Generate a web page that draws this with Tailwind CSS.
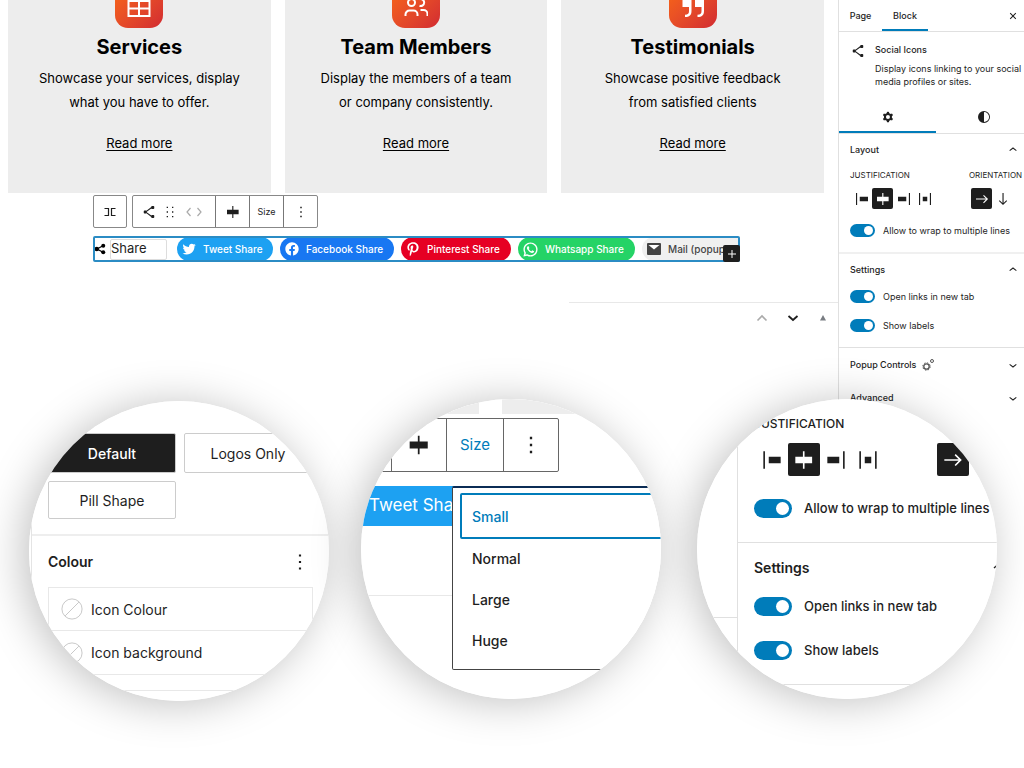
<!DOCTYPE html>
<html lang="en">
<head>
<meta charset="utf-8">
<title>Social Icons block</title>
<script src="https://cdn.jsdelivr.net/npm/@tailwindcss/browser@4"></script>
</head>
<body class="bg-white font-['Inter',sans-serif] text-[#1e1e1e]">
<svg class="hidden" xmlns="http://www.w3.org/2000/svg">
  <symbol id="share" viewBox="0 0 24 24"><path d="M9 11.8l6.1-4.5c.1.4.4.7.9.7h2c.6 0 1-.4 1-1V5c0-.6-.4-1-1-1h-2c-.6 0-1 .4-1 1v.4l-6.4 4.8c-.2-.1-.4-.2-.6-.2H6c-.6 0-1 .4-1 1v2c0 .6.4 1 1 1h2c.2 0 .4-.1.6-.2l6.4 4.8v.4c0 .6.4 1 1 1h2c.6 0 1-.4 1-1v-2c0-.6-.4-1-1-1h-2c-.5 0-.8.3-.9.7L9 12.2v-.4z"/></symbol>
  <symbol id="share-round" viewBox="0 0 24 24"><circle cx="5.500" cy="12" r="4.500"/><circle cx="18.500" cy="5.500" r="4"/><circle cx="18.500" cy="18.500" r="4"/><path d="M18 5.500 6 12l12 6.500" fill="none" stroke="currentColor" stroke-width="2.400"/></symbol>
  <symbol id="j-left" viewBox="0 0 24 24"><path d="M9 9v6h11V9H9zM4 20h1.500V4H4v16z"/></symbol>
  <symbol id="j-center" viewBox="0 0 24 24"><path d="M12.500 15v5H11v-5H4V9h7V4h1.500v5h7v6h-7Z"/></symbol>
  <symbol id="j-right" viewBox="0 0 24 24"><path d="M4 15h11V9H4v6zM18.500 4v16H20V4h-1.500z"/></symbol>
  <symbol id="j-between" viewBox="0 0 24 24"><path d="M9 15h6V9H9v6zm-5 5h1.500V4H4v16zM18.500 4v16H20V4h-1.500z"/></symbol>
  <symbol id="arrow-right" viewBox="0 0 24 24"><path d="m14.500 6.500-1 1 3.700 3.700H4v1.600h13.200l-3.700 3.700 1 1 5.600-5.500z"/></symbol>
  <symbol id="arrow-down" viewBox="0 0 24 24"><path d="m16.500 13.500-3.700 3.700V4h-1.500v13.200l-3.800-3.700-1 1 5.500 5.600 5.500-5.600z"/></symbol>
  <symbol id="chev-up" viewBox="0 0 24 24"><path d="M6.500 12.400L12 8l5.500 4.400-.9 1.200L12 10l-4.500 3.600-1-1.200z"/></symbol>
  <symbol id="chev-down" viewBox="0 0 24 24"><path d="M17.500 11.600L12 16l-5.500-4.400.9-1.200L12 14l4.500-3.600 1 1.200z"/></symbol>
  <symbol id="more" viewBox="0 0 24 24"><path d="M13 19h-2v-2h2v2zm0-6h-2v-2h2v2zm0-6h-2V5h2v2z"/></symbol>
  <symbol id="drag" viewBox="0 0 24 24"><path d="M7 6h2V4H7v2zm0 7h2v-2H7v2zm0 7h2v-2H7v2zm8-16v2h2V4h-2zm0 9h2v-2h-2v2zm0 7h2v-2h-2v2z"/></symbol>
  <symbol id="contrast" viewBox="0 0 24 24"><path fill-rule="evenodd" d="M20 12a8 8 0 1 1-16 0 8 8 0 0 1 16 0Zm-1.200 0a6.800 6.800 0 0 1-6.800 6.800v-13.600a6.800 6.800 0 0 1 6.800 6.800Z"/></symbol>
  <symbol id="close" viewBox="0 0 24 24"><path d="M12 13.060l3.712 3.713 1.061-1.060L13.061 12l3.712-3.712-1.060-1.060L12 10.938 8.288 7.227l-1.061 1.060L10.939 12l-3.712 3.712 1.060 1.061L12 13.061z"/></symbol>
  <symbol id="gear" viewBox="0 0 24 24"><path fill-rule="evenodd" d="M10.289 4.836A1 1 0 0111.275 4h1.306a1 1 0 01.987.836l.244 1.466c.787.260 1.503.679 2.108 1.218l1.393-.522a1 1 0 011.216.437l.653 1.130a1 1 0 01-.230 1.273l-1.148.944a6.025 6.025 0 010 2.435l1.149.946a1 1 0 01.230 1.272l-.653 1.130a1 1 0 01-1.216.437l-1.394-.522c-.605.540-1.320.958-2.108 1.218l-.244 1.466a1 1 0 01-.987.836h-1.306a1 1 0 01-.986-.836l-.244-1.466a5.995 5.995 0 01-2.108-1.218l-1.394.522a1 1 0 01-1.217-.436l-.653-1.131a1 1 0 01.230-1.272l1.149-.946a6.026 6.026 0 010-2.435l-1.148-.944a1 1 0 01-.230-1.272l.653-1.131a1 1 0 011.217-.437l1.393.522a5.994 5.994 0 012.108-1.218l.244-1.466zM14.929 12a3 3 0 11-6 0 3 3 0 016 0z"/></symbol>
  <symbol id="none" viewBox="0 0 24 24"><circle cx="12" cy="12" r="11" fill="#fff" stroke="#c4c4c4"/><path d="M4.500 19.500 19.500 4.500" stroke="#c4c4c4"/></symbol>
</svg>

<div class="relative min-h-screen overflow-hidden">
  <div class="flex items-start">
    <main class="min-w-0 flex-1">
      <section class="grid grid-cols-3 gap-[14px] pl-2 pr-[14px]">
        <article class="h-[193px] overflow-hidden bg-[#ededed] text-center text-black">
          <div class="mx-auto -mt-5 flex size-12 items-center justify-center rounded-[13px] bg-linear-135 from-[#fb6a0c] to-[#d22a31]">
            <svg class="mt-2 size-6" viewBox="0 0 24 24" fill="none" stroke="#fff" stroke-width="2"><path d="M1.500-2h21v22h-21zM12-2v22M1.500 5h21M1.500 12.500h21"/></svg>
          </div>
          <h2 class="mt-1 text-[20px] leading-[30px] font-bold">Services</h2>
          <p class="mt-1 text-[13px] leading-6">Showcase your services, display<br>what you have to offer.</p>
          <a href="#" class="mt-[17px] inline-block text-[13px] leading-6 underline underline-offset-2">Read more</a>
        </article>
        <article class="h-[193px] overflow-hidden bg-[#ededed] text-center text-black">
          <div class="mx-auto -mt-5 flex size-12 items-center justify-center rounded-[13px] bg-linear-135 from-[#fb6a0c] to-[#d22a31]">
            <svg class="mt-2 size-6" viewBox="0 0 24 24" fill="none" stroke="#fff" stroke-width="2"><circle cx="7.500" cy="6.500" r="3.500"/><path d="M1.500 20v-1.500a4 4 0 0 1 4-4h4a4 4 0 0 1 4 4V20M15.500 3.200a3.500 3.500 0 1 1 0 6.600M16.500 14h3a4 4 0 0 1 4 4v2"/></svg>
          </div>
          <h2 class="mt-1 text-[20px] leading-[30px] font-bold">Team Members</h2>
          <p class="mt-1 text-[13px] leading-6">Display the members of a team<br>or company consistently.</p>
          <a href="#" class="mt-[17px] inline-block text-[13px] leading-6 underline underline-offset-2">Read more</a>
        </article>
        <article class="h-[193px] overflow-hidden bg-[#ededed] text-center text-black">
          <div class="mx-auto -mt-5 flex size-12 items-center justify-center rounded-[13px] bg-linear-135 from-[#fb6a0c] to-[#d22a31]">
            <svg class="mt-2 size-6" viewBox="0 0 24 24" fill="#fff"><path d="M1.500 4h9v11c0 4-2 6-6.500 6v-2.200c3 0 4-1.300 4-3.800v-4H1.500zM14 4h9v11c0 4-2 6-6.500 6v-2.200c3 0 4-1.300 4-3.800v-4H14z"/></svg>
          </div>
          <h2 class="mt-1 text-[20px] leading-[30px] font-bold">Testimonials</h2>
          <p class="mt-1 text-[13px] leading-6">Showcase positive feedback<br>from satisfied clients</p>
          <a href="#" class="mt-[17px] inline-block text-[13px] leading-6 underline underline-offset-2">Read more</a>
        </article>
      </section>

      <div class="mt-0.5 flex gap-[5px] pl-[93px]">
        <button aria-label="Select parent block" class="flex h-[33px] w-[34px] items-center justify-center rounded-xs border border-[#888]">
          <svg class="h-3 w-3.5" viewBox="0 0 14 12" fill="none" stroke="#1e1e1e" stroke-width="1.200"><path d="M1.500 2.500H5.500v7H1.500M12.500 2.500H8.500v7H12.500"/></svg>
        </button>
        <div class="flex h-[33px] rounded-xs border border-[#888]" role="toolbar">
          <div class="flex w-[83px] items-center border-r border-[#777] pl-[7px]">
            <button aria-label="Social icons"><svg class="size-[18px]" fill="currentColor"><use href="#share"/></svg></button>
            <button aria-label="Drag" class="ml-1"><svg class="size-4" fill="currentColor"><use href="#drag"/></svg></button>
            <button aria-label="Move" class="ml-2"><svg class="h-3 w-4" viewBox="0 0 16 12" fill="none" stroke="#aaa" stroke-width="1.200"><path d="M4.500 2 1 6l3.500 4M11.500 2 15 6l-3.500 4"/></svg></button>
          </div>
          <button aria-label="Justify" class="flex w-[34px] items-center justify-center border-r border-[#777]"><svg class="size-[18px]" fill="currentColor"><use href="#j-center"/></svg></button>
          <button class="w-[34px] border-r border-[#777] text-[9px]">Size</button>
          <button aria-label="Options" class="flex w-[33px] items-center justify-center"><svg class="size-[18px]" fill="currentColor"><use href="#more"/></svg></button>
        </div>
      </div>

      <div class="relative mt-2 ml-[93px] flex h-[26px] w-[647px] items-center rounded-xs text-[10px] font-medium text-white">
        <svg class="ml-px size-3 shrink-0 text-black" fill="currentColor"><use href="#share-round"/></svg>
        <input aria-label="Share text" value="Share" class="ml-1 h-[21px] w-[57px] shrink-0 rounded-xs border border-[#ddd] pb-0.5 text-[13px] font-normal text-[#1e1e1e]">
        <div class="ml-2.5 flex h-[24px] min-w-0 flex-1 gap-[7px] overflow-hidden">
          <a href="#" class="flex w-[96px] shrink-0 items-center rounded-full bg-[#1da1f2] pl-1"><svg class="size-4" viewBox="0 0 24 24" fill="#fff"><path d="M22.230 5.924c-.736.326-1.527.547-2.357.646.847-.508 1.498-1.312 1.804-2.270-.793.470-1.671.812-2.606.996C18.324 4.498 17.257 4 16.077 4c-2.266 0-4.103 1.837-4.103 4.103 0 .322.036.635.106.935C8.670 8.867 5.647 7.234 3.623 4.751 3.270 5.357 3.067 6.062 3.067 6.814c0 1.424.724 2.679 1.825 3.415-.673-.021-1.305-.206-1.859-.513v.052c0 1.988 1.414 3.647 3.292 4.023-.344.094-.707.144-1.081.144-.264 0-.521-.026-.772-.074.522 1.630 2.038 2.816 3.833 2.850-1.404 1.100-3.174 1.756-5.096 1.756-.331 0-.658-.019-.979-.057 1.816 1.164 3.973 1.843 6.290 1.843 7.547 0 11.675-6.252 11.675-11.675 0-.178-.004-.355-.012-.531C20.985 7.470 21.680 6.747 22.230 5.924z"/></svg><span class="ml-1.5">Tweet Share</span></a>
          <a href="#" class="flex w-[114px] shrink-0 items-center rounded-full bg-[#1877f2] pl-1"><svg class="size-4" viewBox="0 0 24 24" fill="#fff"><path d="M12 2C6.500 2 2 6.500 2 12c0 5 3.700 9.100 8.400 9.900v-7H7.900V12h2.500V9.800c0-2.500 1.500-3.900 3.800-3.900 1.100 0 2.200.2 2.200.2v2.500h-1.300c-1.200 0-1.600.8-1.600 1.600V12h2.800l-.4 2.900h-2.300v7C18.300 21.100 22 17 22 12c0-5.500-4.500-10-10-10z"/></svg><span class="ml-1.5">Facebook Share</span></a>
          <a href="#" class="flex w-[110px] shrink-0 items-center rounded-full bg-[#e60023] pl-1"><svg class="size-4" viewBox="0 0 24 24" fill="#fff"><path d="M12.289 2C6.617 2 3.606 5.648 3.606 9.622c0 1.846 1.025 4.146 2.666 4.878.250.111.381.063.439-.169.044-.175.267-1.029.365-1.428.032-.128.017-.237-.091-.362C6.445 11.911 6.010 10.750 6.010 9.668c0-2.777 2.194-5.464 5.933-5.464 3.230 0 5.490 2.108 5.490 5.122 0 3.407-1.794 5.768-4.130 5.768-1.291 0-2.257-1.021-1.948-2.277.372-1.495 1.089-3.112 1.089-4.191 0-.967-.542-1.775-1.663-1.775-1.319 0-2.379 1.309-2.379 3.059 0 1.115.394 1.869.394 1.869s-1.302 5.279-1.540 6.261c-.405 1.666.053 4.368.094 4.604.021.126.167.169.250.063.129-.165 1.699-2.419 2.142-4.051.158-.590.817-2.995.817-2.995.430.784 1.681 1.446 3.013 1.446 3.963 0 6.822-3.494 6.822-7.833C20.394 5.112 16.849 2 12.289 2"/></svg><span class="ml-1.5">Pinterest Share</span></a>
          <a href="#" class="flex w-[117px] shrink-0 items-center rounded-full bg-[#25d366] pl-1"><svg class="size-[17px]" viewBox="0 0 24 24" fill="#fff"><path fill-rule="evenodd" d="M12.012 2C6.506 2 2.023 6.478 2.021 11.984c-.001 1.760.460 3.479 1.334 4.993L2 22l5.232-1.236c1.459.796 3.102 1.214 4.774 1.215h.004c5.505 0 9.985-4.480 9.988-9.985.002-2.669-1.036-5.178-2.922-7.066C17.190 3.041 14.684 2.001 12.012 2zM12.010 4c2.136.001 4.143.834 5.652 2.342 1.509 1.510 2.338 3.516 2.336 5.650-.002 4.404-3.584 7.987-7.990 7.987-1.333-.001-2.654-.336-3.817-.971l-.673-.367-.745.175-1.968.465.480-1.785.217-.801-.414-.718c-.698-1.208-1.067-2.590-1.066-3.993C4.023 7.582 7.607 4 12.010 4zM8.477 7.375c-.167 0-.437.063-.666.313-.229.249-.875.852-.875 2.080 0 1.228.894 2.415 1.019 2.582.124.166 1.727 2.765 4.264 3.765 2.108.831 2.536.667 2.994.625.458-.041 1.477-.602 1.685-1.185.208-.583.209-1.085.147-1.188-.062-.104-.229-.166-.479-.291-.249-.125-1.476-.727-1.705-.810-.229-.083-.396-.125-.562.125-.166.250-.643.810-.789.976-.146.167-.291.190-.541.065-.250-.126-1.054-.390-2.008-1.240-.742-.661-1.243-1.477-1.389-1.727-.145-.249-.014-.386.111-.510.112-.112.248-.291.373-.437.124-.146.167-.250.250-.416.083-.166.041-.313-.021-.438-.062-.125-.548-1.358-.770-1.852-.187-.415-.384-.424-.562-.431-.145-.006-.311-.006-.477-.006z"/></svg><span class="ml-1.5">Whatsapp Share</span></a>
          <a href="#" class="flex w-[130px] shrink-0 items-center rounded-full bg-[#f0f0f0] pl-1 text-[#444]"><svg class="h-3 w-4 text-[#444]" viewBox="0 0 16 12" fill="currentColor"><rect x="1" width="14" height="12" rx="1"/><path d="M2.500 2h11L8 6.500z" fill="#fff"/></svg><span class="ml-1.5 whitespace-nowrap">Mail (popup)</span></a>
        </div>
        <div class="pointer-events-none absolute inset-0 rounded-xs border-2 border-t-2 border-[#2b8cc4]"></div>
        <button aria-label="Add block" class="absolute right-0 bottom-0 flex size-[17px] items-center justify-center rounded-xs bg-[#1e1e1e]"><svg class="size-2.5" viewBox="0 0 10 10" stroke="#fff"><path d="M5 1v8M1 5h8"/></svg></button>
      </div>

      <div class="mt-[40px] ml-[569px] flex h-8 items-center justify-end gap-[15px] border-t border-[#e8e8e8] pr-2 pb-0.5">
        <button aria-label="Move up" class="flex w-4 justify-center"><svg class="h-2 w-3" viewBox="0 0 12 8" fill="none" stroke="#aaa" stroke-width="1.600"><path d="M1.500 6.500 6 2l4.500 4.500"/></svg></button>
        <button aria-label="Move down" class="flex w-4 justify-center"><svg class="h-2 w-3" viewBox="0 0 12 8" fill="none" stroke="#1e1e1e" stroke-width="1.800"><path d="M1.500 2 6 6l4.500-4"/></svg></button>
        <button aria-label="Toggle panel" class="flex w-3.5 justify-center"><svg class="size-1.5" viewBox="0 0 6 6" fill="#787c82"><path d="m3 0 3 5.500H0z"/></svg></button>
      </div>
    </main>

    <aside class="h-[430px] w-[186px] shrink-0 border-l border-[#e0e0e0] bg-white text-[9px]">
      <div class="flex h-8 items-stretch border-b border-[#e0e0e0] text-[9px] font-medium">
        <button class="w-[43px]">Page</button>
        <button class="w-[46px] border-t-2 border-b-2 border-t-transparent border-b-[#007cba]">Block</button>
        <button aria-label="Close" class="mr-[3px] ml-auto"><svg class="size-4" fill="currentColor"><use href="#close"/></svg></button>
      </div>
      <div class="flex h-[69px] gap-2 pt-2.5 pl-2.5">
        <svg class="size-[18px] shrink-0" fill="currentColor"><use href="#share"/></svg>
        <div>
          <h3 class="leading-4 font-medium">Social Icons</h3>
          <p class="mt-1 leading-[13px] whitespace-nowrap">Display icons linking to your social<br>media profiles or sites.</p>
        </div>
      </div>
      <div class="flex h-[33px] border-b border-[#e0e0e0]">
        <button aria-label="Settings" class="flex w-[97px] items-center justify-center border-t-2 border-b-2 border-t-transparent border-b-[#007cba]"><svg class="size-4" fill="currentColor"><use href="#gear"/></svg></button>
        <button aria-label="Styles" class="flex flex-1 items-center justify-center pl-2"><svg class="size-[18px]" fill="currentColor"><use href="#contrast"/></svg></button>
      </div>
      <section class="h-[120px] border-b-2 border-[#f0f0f0] pl-[11px]">
        <button class="flex h-8 w-full items-center justify-between pr-[3px] font-medium">Layout<svg class="size-4" fill="currentColor"><use href="#chev-up"/></svg></button>
        <div class="flex text-[8px] leading-[18px]"><span class="w-[119px]">JUSTIFICATION</span><span>ORIENTATION</span></div>
        <div class="mt-1 flex items-center">
          <div class="flex w-[121px] pl-px">
            <button aria-label="Left" class="flex size-[21px] items-center justify-center"><svg class="size-[18px]" fill="currentColor"><use href="#j-left"/></svg></button>
            <button aria-label="Center" class="flex size-[21px] items-center justify-center rounded-xs bg-[#1e1e1e] text-white"><svg class="size-[18px]" fill="currentColor"><use href="#j-center"/></svg></button>
            <button aria-label="Right" class="flex size-[21px] items-center justify-center"><svg class="size-[18px]" fill="currentColor"><use href="#j-right"/></svg></button>
            <button aria-label="Space between" class="flex size-[21px] items-center justify-center"><svg class="size-[18px]" fill="currentColor"><use href="#j-between"/></svg></button>
          </div>
          <button aria-label="Horizontal" class="flex size-[21px] items-center justify-center rounded-xs bg-[#1e1e1e] text-white"><svg class="size-[18px]" fill="currentColor"><use href="#arrow-right"/></svg></button>
          <button aria-label="Vertical" class="flex size-[21px] items-center justify-center"><svg class="size-[18px]" fill="currentColor"><use href="#arrow-down"/></svg></button>
        </div>
        <label class="mt-[15px] flex items-center gap-2 leading-[13px] whitespace-nowrap"><input type="checkbox" checked class="h-[13px] w-[25px] shrink-0 appearance-none rounded-full bg-[#007cba] before:mt-0.5 before:ml-3.5 before:block before:size-[9px] before:rounded-full before:bg-white">Allow to wrap to multiple lines</label>
      </section>
      <section class="h-[94px] border-b border-[#e0e0e0] pl-[11px]">
        <button class="flex h-8 w-full items-center justify-between pr-[3px] font-medium">Settings<svg class="size-4" fill="currentColor"><use href="#chev-up"/></svg></button>
        <label class="mt-1 flex items-center gap-2 leading-[13px]"><input type="checkbox" checked class="h-[13px] w-[25px] shrink-0 appearance-none rounded-full bg-[#007cba] before:mt-0.5 before:ml-3.5 before:block before:size-[9px] before:rounded-full before:bg-white">Open links in new tab</label>
        <label class="mt-4 flex items-center gap-2 leading-[13px]"><input type="checkbox" checked class="h-[13px] w-[25px] shrink-0 appearance-none rounded-full bg-[#007cba] before:mt-0.5 before:ml-3.5 before:block before:size-[9px] before:rounded-full before:bg-white">Show labels</label>
      </section>
      <button class="flex h-[33px] w-full items-center pr-[3px] pl-[11px] font-medium">Popup Controls
        <svg class="ml-1.5 size-3" viewBox="0 0 12 12" fill="none" stroke="#555"><circle cx="4.500" cy="7.500" r="2.700" stroke-width="1.300"/><circle cx="4.500" cy="7.500" r="3.700" stroke-width="1" stroke-dasharray="1.450"/><circle cx="10" cy="2" r="1.500"/></svg>
        <svg class="ml-auto size-4" fill="currentColor"><use href="#chev-down"/></svg></button>
      <button class="flex h-[33px] w-full items-center justify-between pr-[3px] pl-[11px] font-medium">Advanced<svg class="size-4" fill="currentColor"><use href="#chev-down"/></svg></button>
    </aside>
  </div>

  <!-- Magnified details floating over the editor -->
  <div class="absolute inset-x-0 top-[399px] flex pl-[29px] text-[14px]">
    <div class="mt-0.5 size-[300px] shrink-0 rounded-full shadow-[-6px_3px_44px_rgba(0,0,0,0.25)]">
      <div class="size-full overflow-hidden rounded-full bg-white">
        <div class="ml-0.5 h-full w-[340px] border-l border-[#e4e4e4]">
          <div class="flex flex-wrap gap-2 pt-8 pl-4">
            <button class="h-10 w-[128px] rounded-xs border border-[#ccc] bg-[#1e1e1e] font-medium text-white">Default</button>
            <button class="h-10 w-[128px] rounded-xs border border-[#ccc]">Logos Only</button>
            <button class="h-[38px] w-[128px] rounded-xs border border-[#ccc]">Pill Shape</button>
          </div>
          <div class="mt-[15px] border-t-2 border-[#eee] pl-4">
            <div class="flex h-[51px] w-[265px] items-center justify-between font-semibold"><h3>Colour</h3><button aria-label="Colour options"><svg class="size-[26px]" fill="currentColor"><use href="#more"/></svg></button></div>
            <div class="w-[265px] border border-[#e8e8e8]">
              <button class="flex h-[43px] w-full items-center gap-2 border-b border-[#e8e8e8] pl-3"><svg class="size-[22px]"><use href="#none"/></svg>Icon Colour</button>
              <button class="flex h-[43px] w-full items-center gap-2 pl-3"><svg class="size-[22px]"><use href="#none"/></svg>Icon background</button>
            </div>
          </div>
          <div class="mt-[15px] border-t border-[#e8e8e8]"></div>
        </div>
      </div>
    </div>

    <div class="ml-8 size-[300px] shrink-0 rounded-full shadow-[-6px_3px_44px_rgba(0,0,0,0.25)]">
      <div class="relative size-full overflow-hidden rounded-full bg-white">
        <div class="flex h-[15px] gap-[23px]"><div class="w-[118px] bg-[#ededed]"></div><div class="flex-1 bg-[#ededed]"></div></div>
        <div class="mt-1 flex h-[54px] w-[198px] rounded-xs border border-[#666]">
          <div class="w-[30px] border-r border-[#666]"></div>
          <button aria-label="Justify" class="flex w-[55px] items-center justify-center border-r border-[#666]"><svg class="size-7" fill="currentColor"><use href="#j-center"/></svg></button>
          <button class="w-[57px] border-r border-[#666] text-[15px] text-[#007cba]">Size</button>
          <button aria-label="Options" class="flex flex-1 items-center justify-center"><svg class="size-7" fill="currentColor"><use href="#more"/></svg></button>
        </div>
        <a href="#" class="mt-3.5 flex h-10 w-[130px] items-center bg-[#1da1f2] pl-2 text-[17px] whitespace-nowrap text-white">Tweet Share</a>
        <div class="mt-[69px] border-t border-[#e8e8e8]"></div>
        <div role="menu" class="absolute top-[87px] left-[91px] h-[184px] w-[230px] rounded-xs border border-t-2 border-[#444] border-t-[#0b2c55] bg-white py-[5px] pl-[7px] font-medium">
          <button role="menuitem" class="block h-[46px] w-full rounded-xs border-2 border-[#007cba] pl-2.5 text-left text-[#007cba]">Small</button>
          <button role="menuitem" class="block h-10 w-full pl-3 text-left leading-[32px]">Normal</button>
          <button role="menuitem" class="block h-[41px] w-full pl-3 text-left leading-[32px]">Large</button>
          <button role="menuitem" class="block h-[41px] w-full pl-3 text-left leading-[32px]">Huge</button>
        </div>
      </div>
    </div>

    <div class="ml-9 size-[300px] shrink-0 rounded-full shadow-[-6px_3px_44px_rgba(0,0,0,0.25)]">
      <div class="flex size-full overflow-hidden rounded-full bg-white text-[13px] font-medium">
        <div class="w-[41px] shrink-0 border-r border-[#e0e0e0]"><div class="mt-[218px] border-t border-[#e0e0e0]"></div></div>
        <div class="min-w-0 flex-1">
          <div class="pl-4">
            <div class="pt-4 text-[12px] leading-[18px]">JUSTIFICATION</div>
            <div class="mt-2.5 flex pl-0.5">
              <button aria-label="Left" class="flex h-[33px] w-8 items-center justify-center"><svg class="size-[26px]" fill="currentColor"><use href="#j-left"/></svg></button>
              <button aria-label="Center" class="flex h-[33px] w-8 items-center justify-center rounded-xs bg-[#1e1e1e] text-white"><svg class="size-[26px]" fill="currentColor"><use href="#j-center"/></svg></button>
              <button aria-label="Right" class="flex h-[33px] w-8 items-center justify-center"><svg class="size-[26px]" fill="currentColor"><use href="#j-right"/></svg></button>
              <button aria-label="Space between" class="flex h-[33px] w-8 items-center justify-center"><svg class="size-[26px]" fill="currentColor"><use href="#j-between"/></svg></button>
              <button aria-label="Horizontal" class="ml-[53px] flex h-[33px] w-8 shrink-0 items-center justify-center rounded-xs bg-[#1e1e1e] text-white"><svg class="size-[26px]" fill="currentColor"><use href="#arrow-right"/></svg></button>
            </div>
            <label class="mt-[22px] flex items-center gap-3 leading-5 whitespace-nowrap"><input type="checkbox" checked class="h-[19px] w-[38px] shrink-0 appearance-none rounded-full bg-[#007cba] before:mt-[3px] before:ml-[22px] before:block before:size-[13px] before:rounded-full before:bg-white">Allow to wrap to multiple lines</label>
          </div>
          <div class="mt-6 border-t border-[#e0e0e0] pl-4">
            <div class="flex h-12 items-center justify-between text-[14px] font-semibold"><h3>Settings</h3><svg class="-mr-3.5 size-6" fill="currentColor"><use href="#chev-up"/></svg></div>
            <label class="mt-[5px] flex items-center gap-3 leading-5"><input type="checkbox" checked class="h-[19px] w-[38px] shrink-0 appearance-none rounded-full bg-[#007cba] before:mt-[3px] before:ml-[22px] before:block before:size-[13px] before:rounded-full before:bg-white">Open links in new tab</label>
            <label class="mt-6 flex items-center gap-3 leading-5"><input type="checkbox" checked class="h-[19px] w-[38px] shrink-0 appearance-none rounded-full bg-[#007cba] before:mt-[3px] before:ml-[22px] before:block before:size-[13px] before:rounded-full before:bg-white">Show labels</label>
          </div>
          <div class="mt-6 border-t border-[#e0e0e0]"></div>
        </div>
      </div>
    </div>
  </div>
</div>
</body>
</html>
